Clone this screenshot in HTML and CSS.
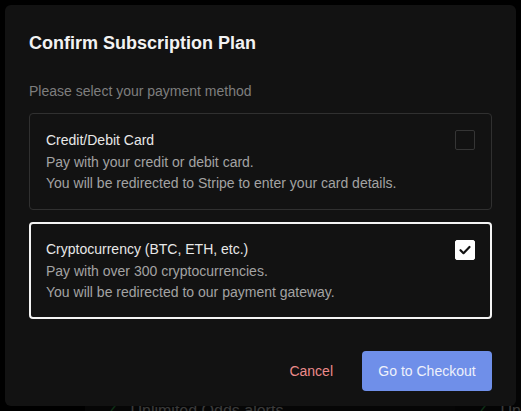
FILE: index.html
```html
<!DOCTYPE html>
<html lang="en">
<head>
  <meta charset="UTF-8">
  <meta name="viewport" content="width=device-width, initial-scale=1.0">
  <title>Confirm Subscription Plan</title>
  <link rel="stylesheet" href="styles.css">
</head>
<body>

  <!-- Pricing page behind the dialog -->
  <div class="page">
    <div class="plans">
      <div class="plan">
        <div class="features"><span class="tick">&#10003;</span> Unlimited Odds alerts</div>
      </div>
      <div class="plan">
        <div class="features"><span class="tick">&#10003;</span> Unlimited</div>
      </div>
    </div>
  </div>

  <!-- Payment method dialog -->
  <div class="overlay">
    <div class="modal">
      <h2 class="modal-title">Confirm Subscription Plan</h2>
      <p class="modal-subtitle">Please select your payment method</p>

      <div class="methods">
        <div class="method">
          <div class="method-text">
            <div class="method-name">Credit/Debit Card</div>
            <div class="method-desc">Pay with your credit or debit card.<br>You will be redirected to Stripe to enter your card details.</div>
          </div>
          <span class="check"></span>
        </div>

        <div class="method selected">
          <div class="method-text">
            <div class="method-name">Cryptocurrency (BTC, ETH, etc.)</div>
            <div class="method-desc">Pay with over 300 cryptocurrencies.<br>You will be redirected to our payment gateway.</div>
          </div>
          <span class="check">
            <svg width="14" height="14" viewBox="0 0 14 14"><path d="M2.5 7.2l3 3 6-6.2" fill="none" stroke="#111" stroke-width="2.2" stroke-linecap="round" stroke-linejoin="round"/></svg>
          </span>
        </div>
      </div>

      <div class="modal-footer">
        <button class="btn-cancel">Cancel</button>
        <button class="btn-primary">Go to Checkout</button>
      </div>
    </div>
  </div>

</body>
</html>
```

FILE: styles.css
```css
body {
  font-family: "Liberation Sans", Arial, sans-serif;
  background-color: #000;
  margin: 0;
  padding: 0;
  height: 411px;
  overflow: hidden;
}

/* background page */
.page {
  padding-top: 70px;
}

.plans {
  display: grid;
  grid-template-columns: 370px 1fr;
  padding-left: 85px;
}

.plan {
  background: #171717;
  height: 341px;
  display: flex;
  align-items: flex-end;
  padding-left: 20px;
}

.plan + .plan {
  background: #101010;
}

.features {
  font-size: 16px;
  color: #cfcfcf;
  white-space: nowrap;
  margin-bottom: -9px;
}

.tick {
  color: #2fb050;
  margin-right: 8px;
}

/* dialog */
.overlay {
  position: fixed;
  inset: 0;
  background: rgba(0, 0, 0, 0.72);
  display: flex;
  align-items: center;
  justify-content: center;
}

.modal {
  width: 511px;
  box-sizing: border-box;
  background: #121212;
  border-radius: 6px;
  padding: 24px 24px 15px;
  color: #fff;
}

.modal-title {
  margin: 0;
  font-size: 18px;
  line-height: 28px;
  font-weight: bold;
  color: #f2f2f2;
}

.modal-subtitle {
  margin: 24px 0 11px;
  font-size: 14px;
  line-height: 21px;
  color: #7e7e7e;
}

.methods {
  display: flex;
  flex-direction: column;
  gap: 12px;
}

.method {
  display: flex;
  justify-content: space-between;
  align-items: flex-start;
  border: 1px solid #303030;
  border-radius: 4px;
  padding: 16px 16px 15px;
}

.method.selected {
  border: 2px solid #f4f4f4;
  padding: 15px 15px 14px;
}

.method-name {
  font-size: 14px;
  line-height: 20px;
  color: #e8e8e8;
  margin-bottom: 2px;
}

.method-desc {
  font-size: 14px;
  line-height: 21px;
  color: #a3a3a3;
}

.check {
  width: 20px;
  height: 20px;
  box-sizing: border-box;
  border: 1px solid #353535;
  border-radius: 2px;
  flex-shrink: 0;
  display: flex;
  align-items: center;
  justify-content: center;
}

.selected .check {
  background: #fff;
  border-color: #fff;
  margin-top: 1px;
}

.modal-footer {
  display: flex;
  justify-content: flex-end;
  align-items: center;
  gap: 13px;
  margin-top: 32px;
}

.modal-footer button {
  font-family: inherit;
  font-size: 14px;
  border: none;
  cursor: pointer;
  height: 40px;
  border-radius: 4px;
}

.btn-cancel {
  background: none;
  color: #ec8a8a;
  padding: 0 16px;
}

.btn-primary {
  background-color: #6f8fe9;
  color: #eef1fb;
  width: 130px;
  padding: 0;
}
```
